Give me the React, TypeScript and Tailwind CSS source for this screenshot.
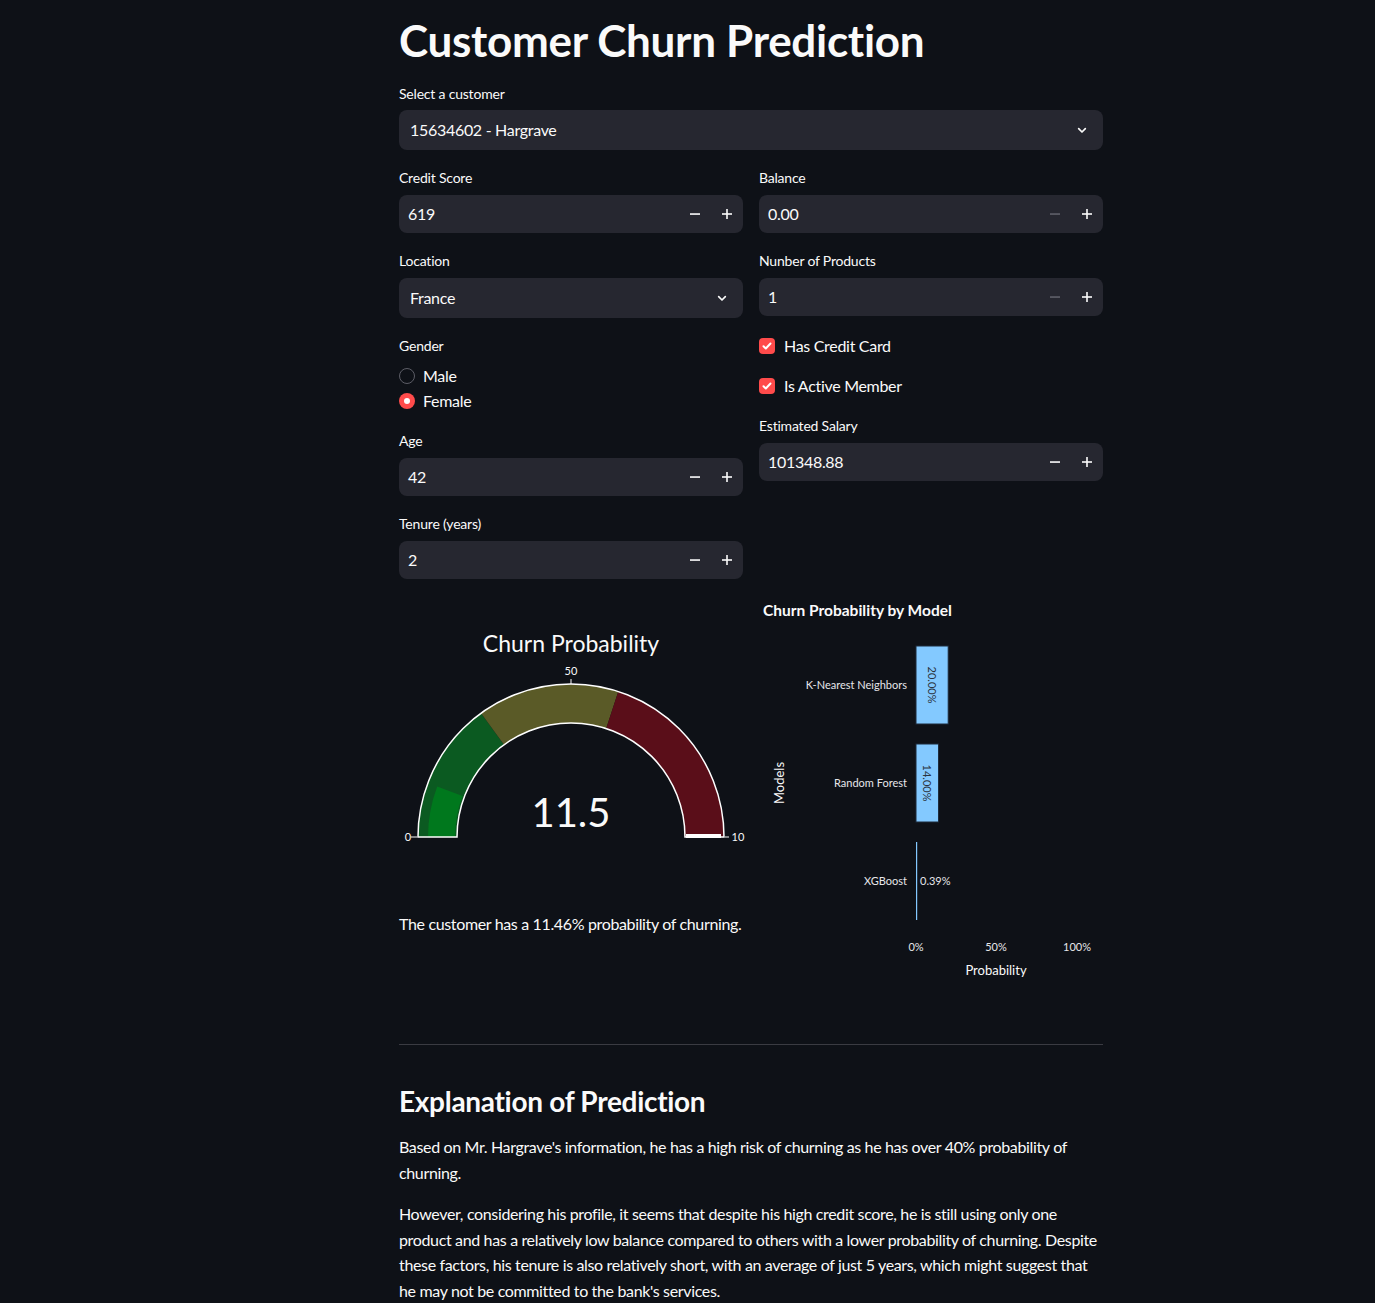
import { ReactNode } from 'react';

const font = { fontFamily: 'Lato, "Noto Sans", sans-serif' };

function Chevron() {
    return (
        <svg className="h-4 w-4 text-[#fafafa]" viewBox="0 0 24 24" fill="none" stroke="currentColor" strokeWidth={2.5} strokeLinecap="round" strokeLinejoin="round">
            <path d="M7 10l5 5 5-5" />
        </svg>
    );
}

function Label({ children }: { children: ReactNode }) {
    return <div className="flex h-6 items-center text-sm tracking-[-0.2px] text-[#fafafa]">{children}</div>;
}

function NumberInput({ label, value, minusDisabled = false }: { label: string; value: string; minusDisabled?: boolean }) {
    return (
        <div>
            <Label>{label}</Label>
            <div className="mt-[5px] flex h-[38px] items-center rounded-lg bg-[#262730]">
                <span className="flex-1 pl-[9px] text-base tracking-[-0.3px] text-[#fafafa]">{value}</span>
                <span className={`flex h-full w-8 items-center justify-center ${minusDisabled ? 'text-[#5f6069]' : 'text-[#fafafa]'}`}>
                    <svg className="h-3 w-3" viewBox="0 0 12 12"><rect x="1" y="5.25" width="10" height="1.6" fill="currentColor" /></svg>
                </span>
                <span className="flex h-full w-8 items-center justify-center text-[#fafafa]">
                    <svg className="h-3 w-3" viewBox="0 0 12 12"><rect x="1" y="5.2" width="10" height="1.6" fill="currentColor" /><rect x="5.2" y="1" width="1.6" height="10" fill="currentColor" /></svg>
                </span>
            </div>
        </div>
    );
}

function Select({ label, value, first = false }: { label: string; value: string; first?: boolean }) {
    return (
        <div>
            <Label>{label}</Label>
            <div className={`${first ? 'mt-1' : 'mt-[5px]'} flex h-10 items-center justify-between rounded-lg bg-[#262730] pl-[11px] pr-[13px]`}>
                <span className="text-base tracking-[-0.3px] text-[#fafafa]">{value}</span>
                <Chevron />
            </div>
        </div>
    );
}

function Checkbox({ label, className = '' }: { label: string; className?: string }) {
    return (
        <div className={`flex h-6 items-center gap-[9px] ${className}`}>
            <span className="flex h-4 w-4 items-center justify-center rounded-[4px] bg-[#ff4b4b]">
                <svg className="h-3 w-3" viewBox="0 0 12 12" fill="none" stroke="white" strokeWidth={2} strokeLinecap="round" strokeLinejoin="round">
                    <path d="M2.5 6.2l2.3 2.3 4.7-5" />
                </svg>
            </span>
            <span className="text-base tracking-[-0.3px] text-[#fafafa]">{label}</span>
        </div>
    );
}

function Radio({ label, checked }: { label: string; checked?: boolean }) {
    return (
        <div className="flex h-[25px] items-center gap-2">
            {checked ? (
                <span className="flex h-4 w-4 items-center justify-center rounded-full bg-[#ff4b4b]">
                    <span className="h-1.5 w-1.5 rounded-full bg-white" />
                </span>
            ) : (
                <span className="h-4 w-4 rounded-full border border-[#5c5d66]" />
            )}
            <span className="text-base tracking-[-0.3px] text-[#fafafa]">{label}</span>
        </div>
    );
}

// annular sector of the gauge, f in 0..1 from left to right
const CX = 571;
const CY = 838;
function pt(f: number, r: number) {
    const a = Math.PI * (1 - f);
    return `${(CX + r * Math.cos(a)).toFixed(1)},${(CY - r * Math.sin(a)).toFixed(1)}`;
}
function sector(f1: number, f2: number, R: number, r: number) {
    return `M${pt(f1, R)} A${R} ${R} 0 0 1 ${pt(f2, R)} L${pt(f2, r)} A${r} ${r} 0 0 0 ${pt(f1, r)} Z`;
}

function Gauge() {
    return (
        <svg className="overflow-visible" width={344} height={300} viewBox="399 596 344 300" style={font}>
            <text x={571} y={653} textAnchor="middle" fontSize={23} fill="#fafafa">Churn Probability</text>
            <path d={sector(0, 0.3, 153, 114)} fill="#0b5a21" />
            <path d={sector(0.3, 0.6, 153, 114)} fill="#5a5a27" />
            <path d={sector(0.6, 1, 153, 114)} fill="#5a0e19" />
            <path d={sector(0, 0.115, 143, 116)} fill="#00781d" />
            <path d={sector(0, 1, 153, 114)} fill="none" stroke="#ffffff" strokeWidth={1.5} />
            <line x1={686} y1={837} x2={721} y2={837} stroke="#ffffff" strokeWidth={4} />
            <line x1={571} y1={680} x2={571} y2={685} stroke="#fafafa" strokeWidth={1} />
            <line x1={411} y1={838} x2={417} y2={838} stroke="#fafafa" strokeWidth={1} />
            <line x1={725} y1={838} x2={729} y2={838} stroke="#fafafa" strokeWidth={1} />
            <text x={571} y={676} textAnchor="middle" fontSize={11} fill="#fafafa">50</text>
            <text x={408} y={842} textAnchor="middle" fontSize={11} fill="#fafafa">0</text>
            <text x={731.5} y={842} fontSize={11} fill="#fafafa">10</text>
            <text x={571} y={828} textAnchor="middle" fontSize={40} fill="#fafafa">11.5</text>
        </svg>
    );
}

const bars = [
    { name: 'K-Nearest Neighbors', value: 20.0, y: 647 },
    { name: 'Random Forest', value: 14.0, y: 745 },
    { name: 'XGBoost', value: 0.39, y: 843 },
];

function BarChart() {
    const x0 = 916;
    const scale = 161 / 100;
    return (
        <svg width={344} height={404} viewBox="759 596 344 404" style={font}>
            <text x={763} y={617} fontSize={15.5} fontWeight={700} fill="#fafafa">Churn Probability by Model</text>
            <text x={0} y={0} fontSize={13} fill="#fafafa" textAnchor="middle" transform="translate(784 784) rotate(-90)">Models</text>
            {bars.map((b) => {
                const w = b.value * scale;
                const cy = b.y + 39;
                return (
                    <g key={b.name}>
                        <text x={907} y={cy + 4} fontSize={11} fill="#e6e6ea" textAnchor="end">{b.name}</text>
                        {w > 5 ? (
                            <>
                                <rect x={x0} y={b.y} width={w} height={78} fill="#83c9ff" stroke="#1c2a3a" strokeWidth={1} />
                                <text x={0} y={0} fontSize={11} fill="#2b3440" textAnchor="middle" transform={`translate(${x0 + w / 2 - 4} ${cy}) rotate(90)`}>
                                    {b.value.toFixed(2)}%
                                </text>
                            </>
                        ) : (
                            <>
                                <rect x={x0} y={b.y} width={1.2} height={78} fill="#83c9ff" />
                                <text x={x0 + 4} y={cy + 4} fontSize={11} fill="#e6e6ea">{b.value.toFixed(2)}%</text>
                            </>
                        )}
                    </g>
                );
            })}
            <text x={916} y={952} fontSize={11} fill="#e6e6ea" textAnchor="middle">0%</text>
            <text x={996} y={952} fontSize={11} fill="#e6e6ea" textAnchor="middle">50%</text>
            <text x={1077} y={952} fontSize={11} fill="#e6e6ea" textAnchor="middle">100%</text>
            <text x={996} y={976} fontSize={13} fill="#fafafa" textAnchor="middle">Probability</text>
        </svg>
    );
}

export default function App() {
    return (
        <div className="min-h-screen bg-[#0e1117] text-[#fafafa]" style={font}>
            <div className="ml-[399px] w-[704px] pt-[14px] pb-10">
                <h1 className="text-[44px] leading-[52px] font-bold tracking-[-0.3px]">Customer Churn Prediction</h1>

                <div className="mt-4">
                    <Select label="Select a customer" value="15634602 - Hargrave" first />
                </div>

                {/* Inputs */}
                <div className="mt-4 grid grid-cols-2 gap-x-4">
                    <div className="flex flex-col gap-4">
                        <NumberInput label="Credit Score" value="619" />
                        <Select label="Location" value="France" />
                        <div>
                            <Label>Gender</Label>
                            <div className="mt-[5px]">
                                <Radio label="Male" />
                                <Radio label="Female" checked />
                            </div>
                        </div>
                        <NumberInput label="Age" value="42" />
                        <NumberInput label="Tenure (years)" value="2" />
                    </div>
                    <div className="flex flex-col gap-4">
                        <NumberInput label="Balance" value="0.00" minusDisabled />
                        <NumberInput label="Nunber of Products" value="1" minusDisabled />
                        <Checkbox label="Has Credit Card" className="mt-[2px]" />
                        <Checkbox label="Is Active Member" />
                        <NumberInput label="Estimated Salary" value="101348.88" />
                    </div>
                </div>

                {/* Charts */}
                <div className="mt-4 grid grid-cols-2 gap-x-4">
                    <div>
                        <Gauge />
                        <p className="mt-[17px] text-base leading-6 tracking-[-0.35px] whitespace-nowrap">The customer has a 11.46% probability of churning.</p>
                    </div>
                    <div>
                        <BarChart />
                    </div>
                </div>

                <hr className="mt-[45px] border-0 border-t border-[#3a3b42]" />

                <h3 className="mt-[39px] text-[28px] leading-[34px] font-bold tracking-[-0.3px]">Explanation of Prediction</h3>
                <p className="mt-4 text-base leading-[25.6px] tracking-[-0.35px]">
                    Based on Mr. Hargrave's information, he has a high risk of churning as he has over 40% probability of churning.
                </p>
                <p className="mt-4 text-base leading-[25.6px] tracking-[-0.35px]">
                    However, considering his profile, it seems that despite his high credit score, he is still using only one product and has a relatively low balance compared to others with a lower probability of churning. Despite these factors, his tenure is also relatively short, with an average of just 5 years, which might suggest that he may not be committed to the bank's services.
                </p>
            </div>
        </div>
    );
}
